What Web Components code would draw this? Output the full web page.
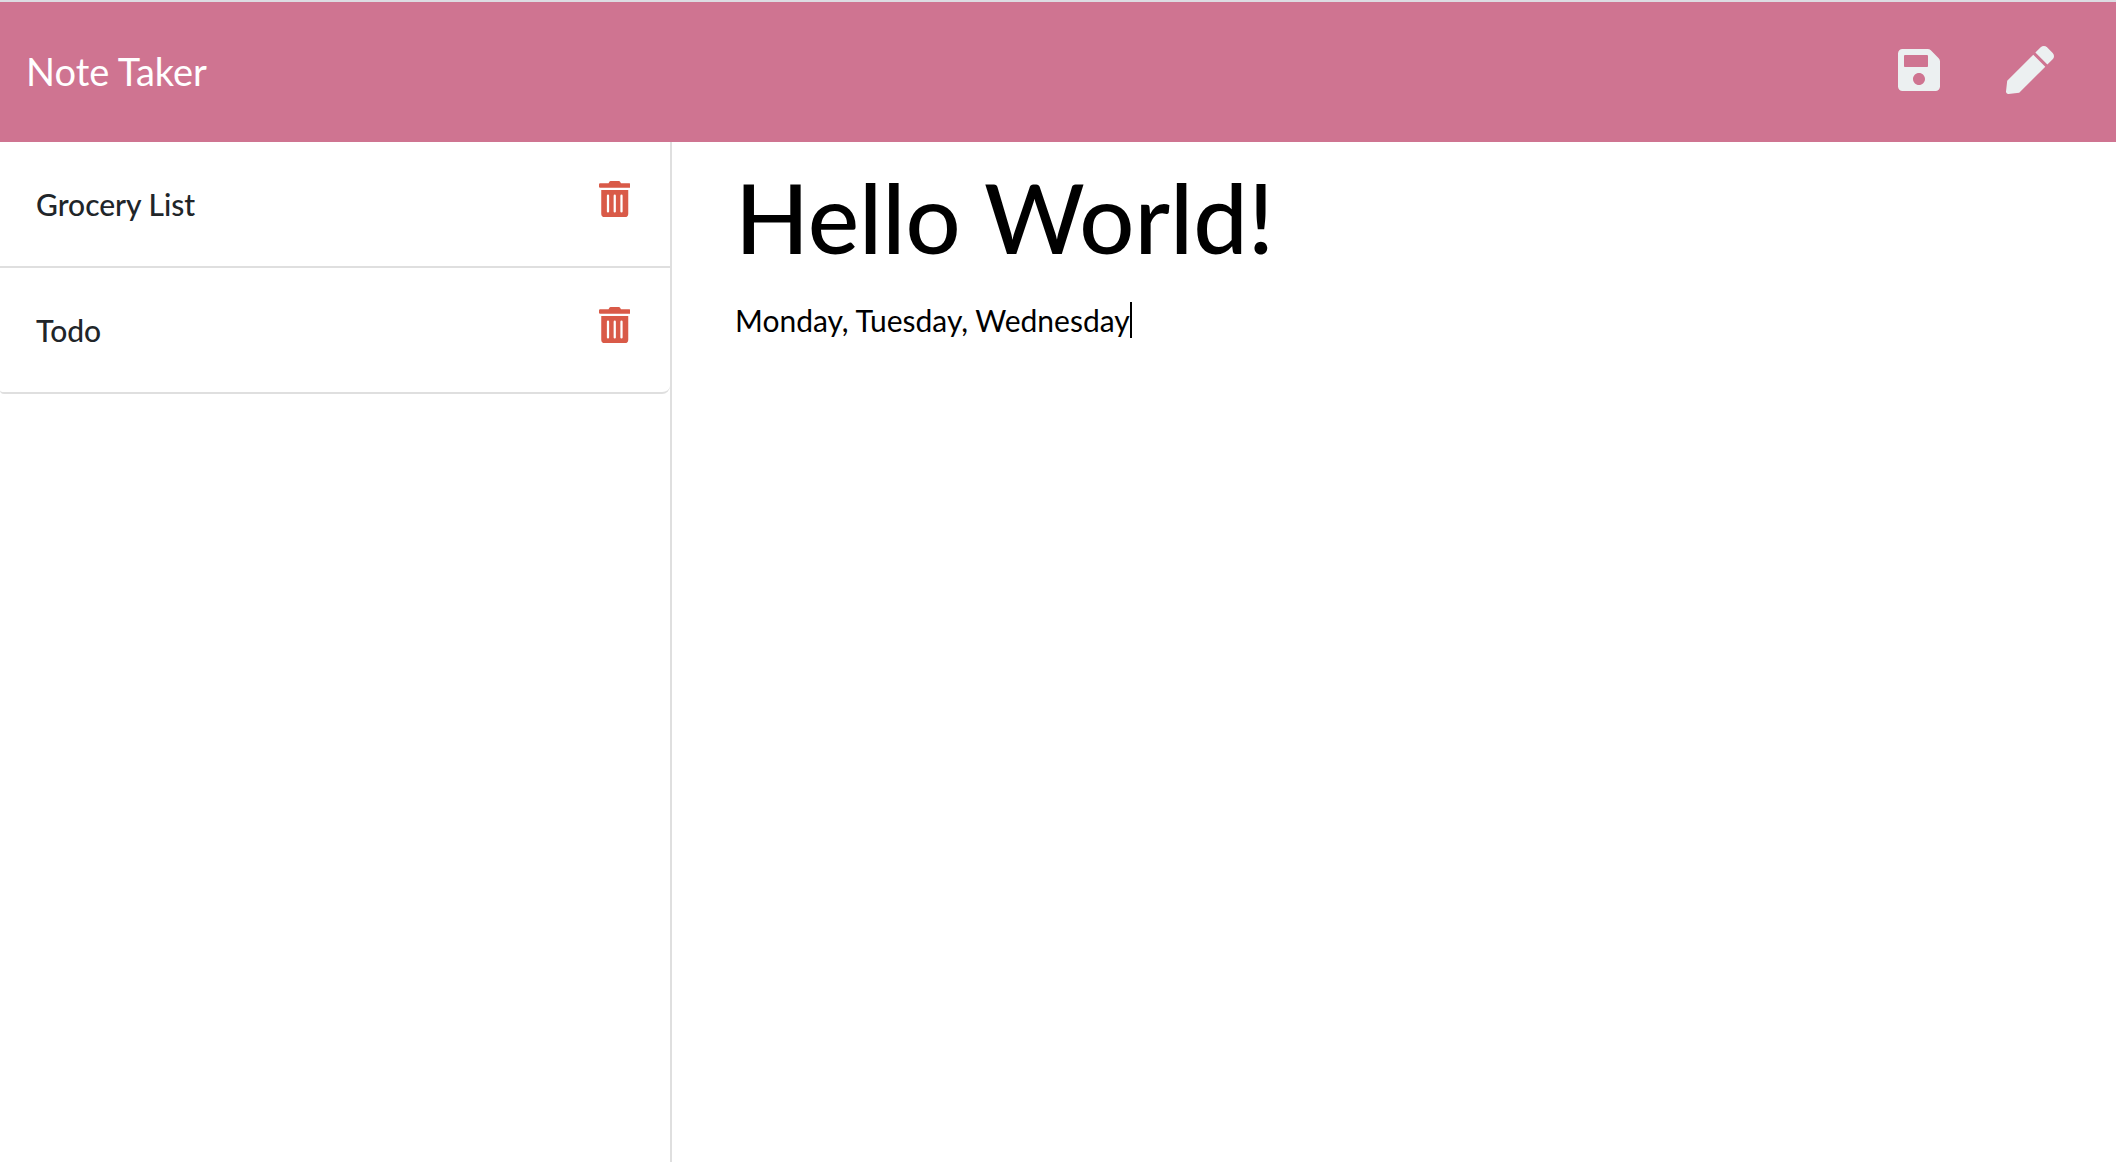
<!DOCTYPE html>
<html lang="en">
<head>
<meta charset="utf-8">
<meta name="viewport" content="width=device-width, initial-scale=1">
<title>Note Taker</title>
<style>
  body { margin: 0; background: #fff; color: #212529; font: 500 30px/45px Lato, "Liberation Sans", sans-serif; }
</style>
</head>
<body>
<note-app></note-app>
<script>
const ICONS = {
  save: ['0 0 448 512', 'M433.941 129.941l-83.882-83.882A48 48 0 0 0 316.118 32H48C21.49 32 0 53.49 0 80v352c0 26.51 21.49 48 48 48h352c26.51 0 48-21.49 48-48V163.882a48 48 0 0 0-14.059-33.941zM224 416c-35.346 0-64-28.654-64-64 0-35.346 28.654-64 64-64s64 28.654 64 64c0 35.346-28.654 64-64 64zm96-304.52V212c0 6.627-5.373 12-12 12H76c-6.627 0-12-5.373-12-12V108c0-6.627 5.373-12 12-12h232c6.627 0 12 5.373 12 12z'],
  pen: ['0 0 512 512', 'M290.74 93.24l128.02 128.02-277.99 277.99-114.14 12.6C11.35 513.54-1.56 500.62.14 485.34l12.7-114.22 277.9-277.88zm207.2-19.06l-60.11-60.11c-18.75-18.75-49.16-18.75-67.91 0l-56.55 56.55 128.02 128.02 56.55-56.55c18.75-18.76 18.75-49.16 0-67.91z'],
  trash: ['0 0 448 512', 'M32 464a48 48 0 0 0 48 48h288a48 48 0 0 0 48-48V128H32zm272-256a16 16 0 0 1 32 0v224a16 16 0 0 1-32 0zm-96 0a16 16 0 0 1 32 0v224a16 16 0 0 1-32 0zm-96 0a16 16 0 0 1 32 0v224a16 16 0 0 1-32 0zM432 32H312l-9.4-18.7A24 24 0 0 0 281.1 0h-114.3a23.72 23.72 0 0 0-21.4 13.3L136 32H16A16 16 0 0 0 0 48v32a16 16 0 0 0 16 16h416a16 16 0 0 0 16-16V48a16 16 0 0 0-16-16z']
};

class BaseElement extends HTMLElement {
  render(html) {
    this.attachShadow({ mode: 'open' }).innerHTML = html;
  }
}

customElements.define('icon-button', class extends BaseElement {
  connectedCallback() {
    const [box, path] = ICONS[this.getAttribute('icon')];
    this.render(`
      <style>
        :host { display: block; }
        button { display: block; margin: 0; padding: 0; border: 0; background: none; color: inherit; cursor: pointer; }
        svg { display: block; height: var(--icon-size, 48px); fill: currentColor; }
      </style>
      <button type="button" aria-label="${this.getAttribute('label')}">
        <svg viewBox="${box}" aria-hidden="true"><path d="${path}"/></svg>
      </button>`);
  }
});

customElements.define('note-header', class extends BaseElement {
  connectedCallback() {
    this.render(`
      <style>
        :host { display: block; border-top: 2px solid #dcdce2; background: #cf7491; }
        nav { display: flex; align-items: center; justify-content: space-between; height: 140px; padding: 0 62px 4px 26px; box-sizing: border-box; }
        a { color: #fff; font-size: 38px; font-weight: 400; line-height: 56px; padding-top: 2px; text-decoration: none; }
        .actions { display: flex; gap: 66px; color: #ecf0f1; }
      </style>
      <nav>
        <a href="#"><slot></slot></a>
        <div class="actions">
          <icon-button icon="save" label="Save note"></icon-button>
          <icon-button icon="pen" label="New note"></icon-button>
        </div>
      </nav>`);
  }
});

customElements.define('note-item', class extends BaseElement {
  connectedCallback() {
    this.render(`
      <style>
        :host { display: flex; align-items: center; justify-content: space-between; box-sizing: border-box; height: 126px; padding: 0 40px 0 36px; border-bottom: 2px solid #dfdfdf; }
        :host(:last-of-type) { border-radius: 0 0 8px 4px; }
        icon-button { --icon-size: 36px; color: #d95a48; padding-bottom: 10px; }
      </style>
      <span><slot></slot></span>
      <icon-button icon="trash" label="Delete note"></icon-button>`);
  }
});

customElements.define('note-list', class extends BaseElement {
  connectedCallback() {
    this.render(`
      <style>
        :host { display: block; border-right: 2px solid #dfdfdf; }
      </style>
      <slot></slot>`);
  }
});

customElements.define('note-editor', class extends BaseElement {
  connectedCallback() {
    this.render(`
      <style>
        :host { display: block; padding: 14px 63px; }
        input, textarea { display: block; margin: 0; padding: 0; border: 0; outline: 0; background: none; color: #000; font-family: inherit; font-weight: inherit; }
        input { width: 100%; height: 120px; font-size: 97px; }
        .body { display: flex; align-items: flex-start; padding-top: 22px; }
        textarea { field-sizing: content; resize: none; overflow: hidden; font-size: 30px; font-weight: 400; line-height: 45px; caret-color: transparent; }
        .caret { width: 2px; height: 36px; margin-top: 4px; background: #000; }
      </style>
      <input type="text" aria-label="Note title" value="Hello World!">
      <div class="body">
        <textarea aria-label="Note text" rows="1">Monday, Tuesday, Wednesday</textarea>
        <span class="caret"></span>
      </div>`);
  }
});

customElements.define('note-app', class extends BaseElement {
  connectedCallback() {
    this.render(`
      <style>
        :host { display: flex; flex-direction: column; min-height: 100vh; }
        main { flex: 1; display: grid; grid-template-columns: calc((100% - 100px) / 3) 1fr; }
      </style>
      <note-header>Note Taker</note-header>
      <main>
        <note-list>
          <note-item>Grocery List</note-item>
          <note-item>Todo</note-item>
        </note-list>
        <note-editor></note-editor>
      </main>`);
  }
});
</script>
</body>
</html>
